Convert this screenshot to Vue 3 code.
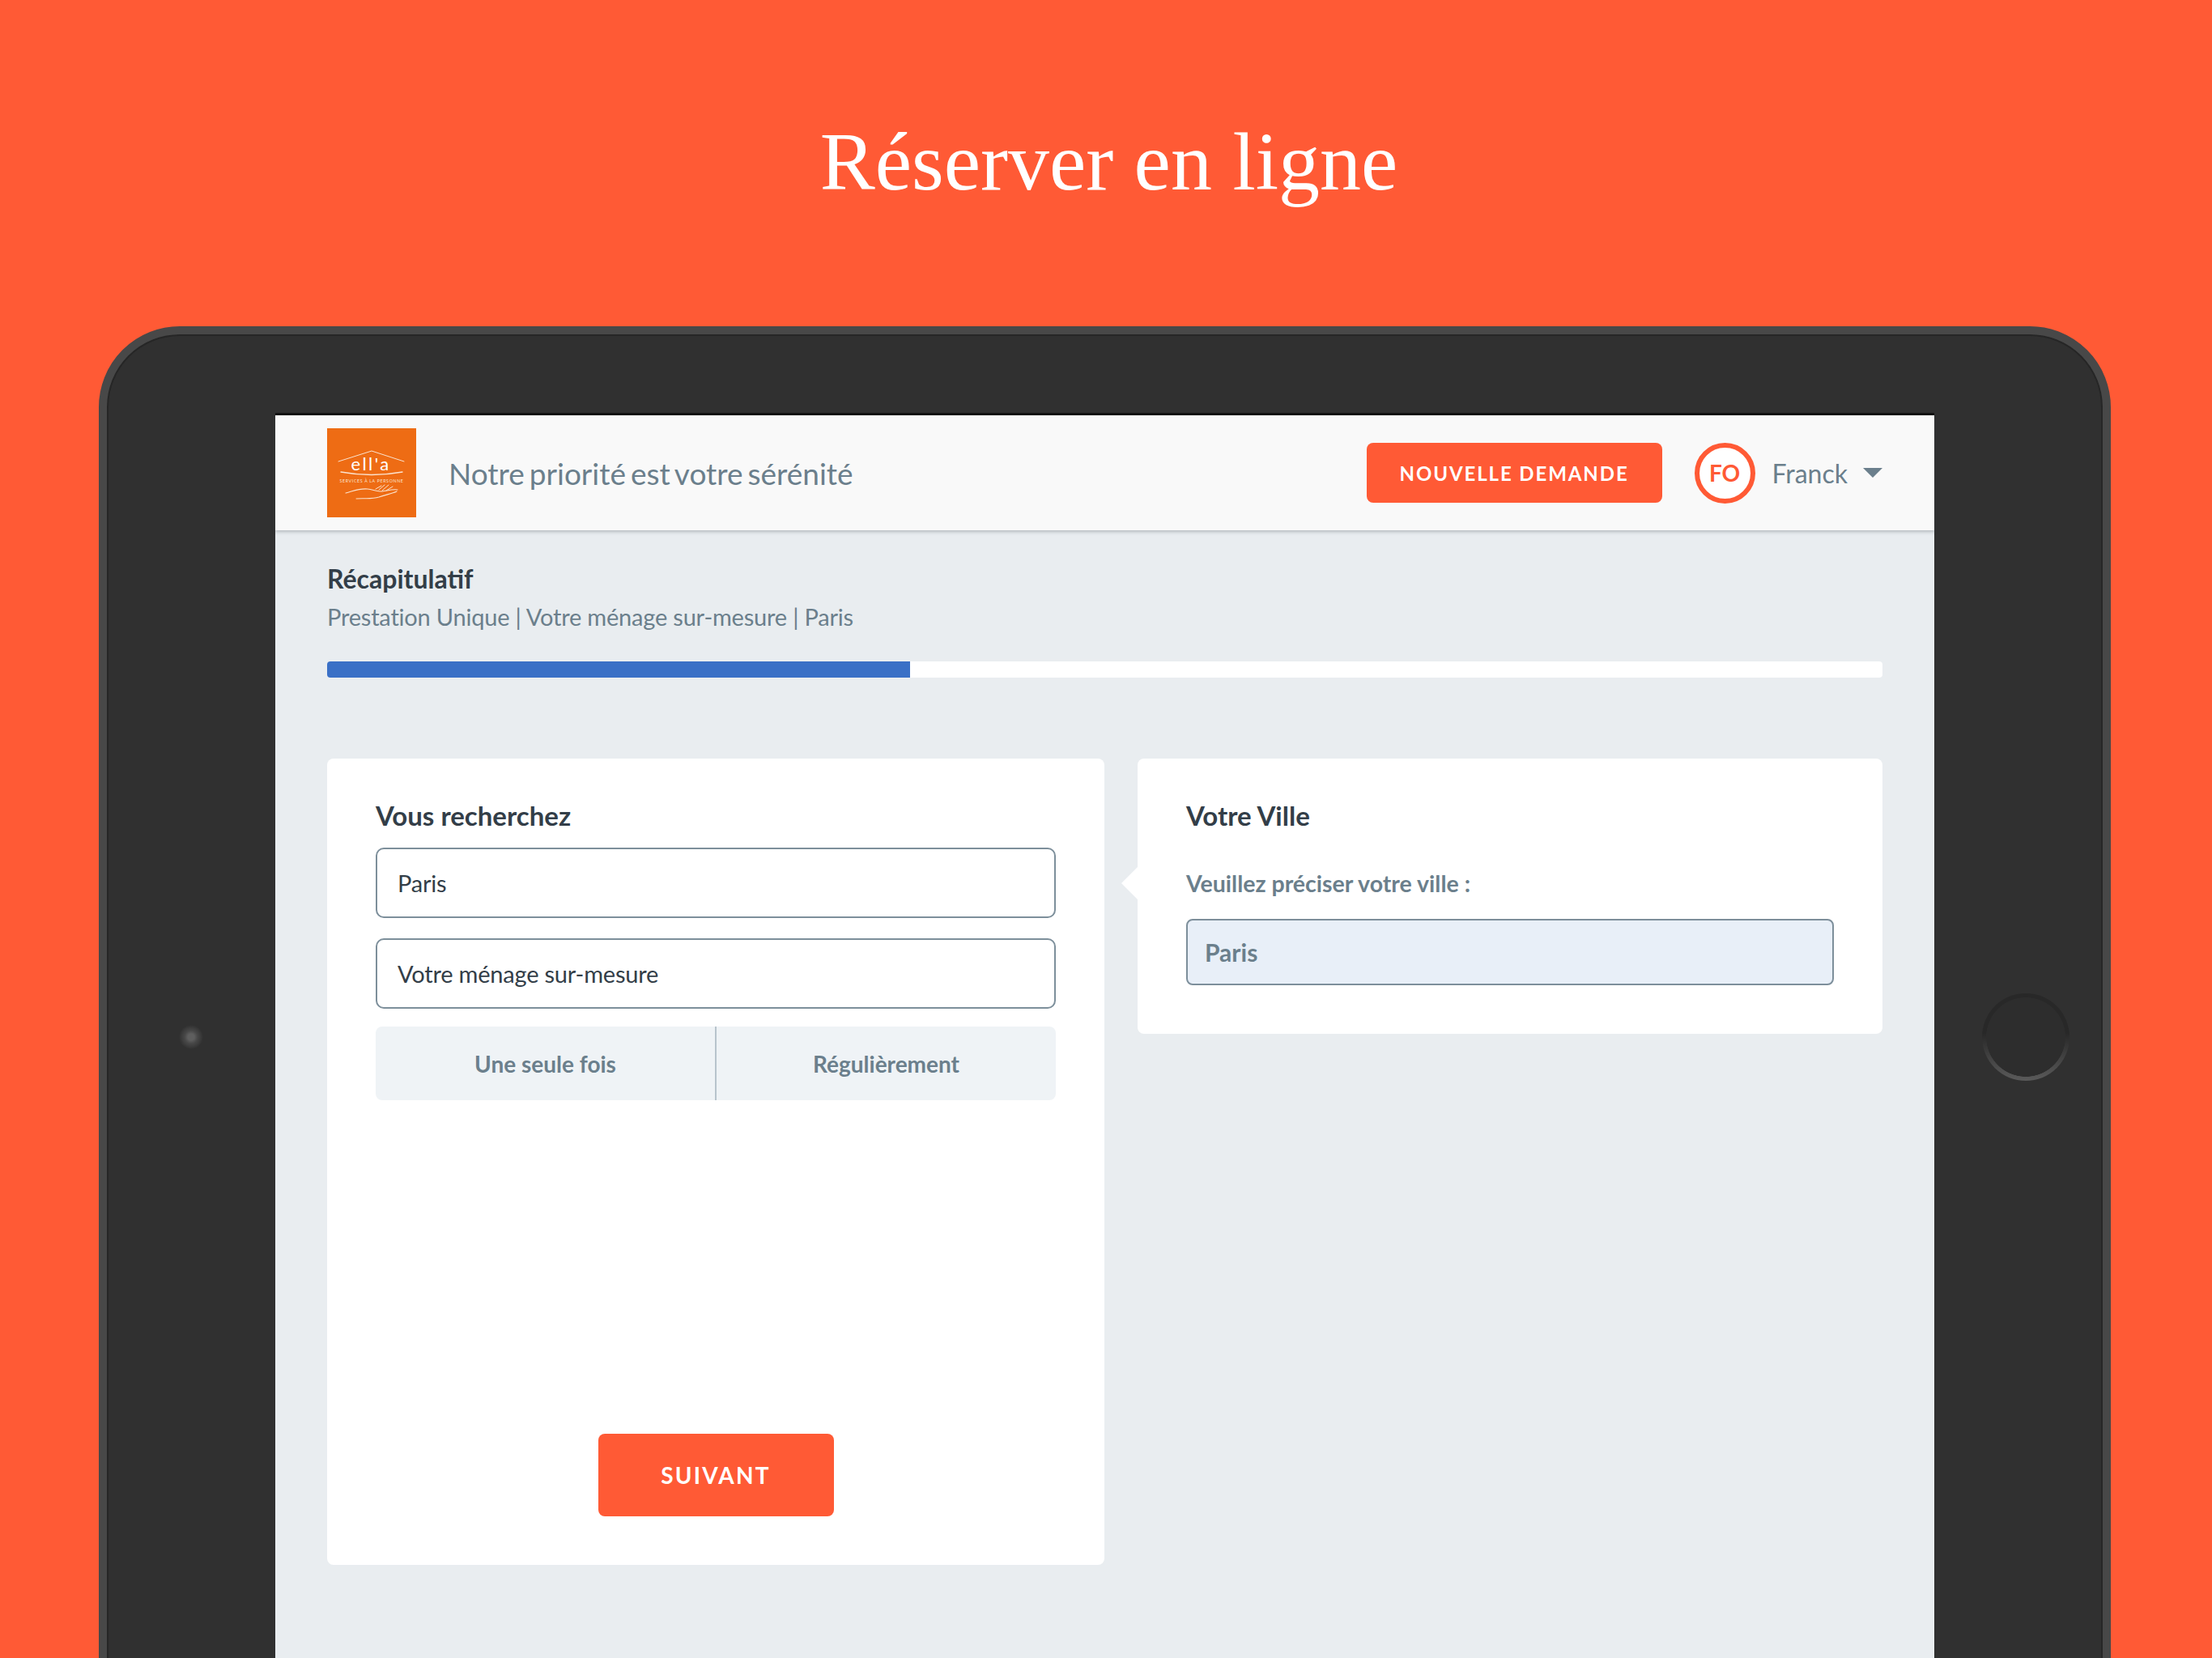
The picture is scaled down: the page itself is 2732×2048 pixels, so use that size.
<script setup>
const summary = 'Prestation Unique | Votre ménage sur-mesure | Paris'
const progress = 37.5
const choices = ['Paris', 'Votre ménage sur-mesure']
const frequencies = ['Une seule fois', 'Régulièrement']
</script>

<template>
  <div class="page">
    <h1 class="hero-title">Réserver en ligne</h1>

    <div class="tablet">
      <div class="bezel">
        <span class="camera"></span>
      </div>

      <main class="screen">
        <header class="topbar">
          <div class="brand">
            <svg class="logo" viewBox="0 0 110 110" role="img" aria-label="ell'a">
              <rect width="110" height="110" fill="#ee6c14" />
              <g fill="none" stroke="#fbe3cf" stroke-linecap="round">
                <path d="M14 41 L55 28 L95 41" stroke-width="1" />
                <path d="M17 54 Q55 61 93 54" stroke-width="1.3" />
                <path d="M23 80 C34 77 40 74 50 75 C57 76 62 78 68 78 C75 77 81 75 87 76" stroke-width="1.1" />
                <path d="M36 87 C46 86 54 88 64 85 C72 82 80 81 86 78" stroke-width="1.1" />
                <path d="M60 75 L67 71 M64 76 L71 70 M68 77 L76 70 M73 77 L81 72" stroke-width="1" />
              </g>
              <text class="logo-name" x="54" y="52" text-anchor="middle">ell'a</text>
              <text class="logo-sub" x="55" y="67" text-anchor="middle">SERVICES À LA PERSONNE</text>
            </svg>
            <span class="tagline">Notre priorité est votre sérénité</span>
          </div>

          <div class="account">
            <button type="button" class="new-request">NOUVELLE DEMANDE</button>
            <span class="avatar">FO</span>
            <span class="account-name">Franck</span>
            <span class="caret"></span>
          </div>
        </header>

        <section class="content">
          <h2 class="recap-title">Récapitulatif</h2>
          <p class="recap-text">{{ summary }}</p>
          <div class="progress">
            <div class="progress-bar" :style="{ width: progress + '%' }"></div>
          </div>

          <div class="columns">
            <div class="card card-search">
              <h3 class="card-title">Vous recherchez</h3>
              <div class="choice-list">
                <div v-for="choice in choices" :key="choice" class="choice">{{ choice }}</div>
              </div>
              <div class="segmented">
                <span v-for="item in frequencies" :key="item" class="segment">{{ item }}</span>
              </div>
              <button type="button" class="next">SUIVANT</button>
            </div>

            <div class="card card-city">
              <span class="card-arrow"></span>
              <h3 class="card-title">Votre Ville</h3>
              <label class="field-label" for="city">Veuillez préciser votre ville :</label>
              <input id="city" class="city-input" value="Paris" />
            </div>
          </div>
        </section>
      </main>

      <div class="bezel bezel-home">
        <span class="home"></span>
      </div>
    </div>
  </div>
</template>

<style>
html,
body {
  margin: 0;
  height: 2048px;
  overflow: hidden;
  background: #ff5a35;
}
</style>

<style scoped>
.page {
  height: 2048px;
  overflow: hidden;
  box-sizing: border-box;
  background: #ff5a35;
  padding: 0 125px 0 122px;
}

.hero-title {
  margin: 0;
  height: 403px;
  padding: 140px 0 0 10px;
  box-sizing: border-box;
  text-align: center;
  font-family: "Liberation Serif", serif;
  font-size: 102px;
  font-weight: 400;
  line-height: 120px;
  color: #fff;
}

.tablet {
  display: flex;
  height: 1756px;
  box-sizing: border-box;
  border: 10px solid #484848;
  border-radius: 100px;
  background: #303030;
  box-shadow: inset 0 0 0 2px #262626;
}

.bezel {
  flex: none;
  width: 208px;
  display: flex;
  align-items: center;
  justify-content: center;
}

.bezel-home {
  box-sizing: border-box;
  padding-left: 18px;
}

.camera {
  width: 30px;
  height: 30px;
  border-radius: 50%;
  background: radial-gradient(circle, #5e5e5e 0 4px, #474747 8px, #3e3e3e 11px, #303030 15px);
}

.home {
  width: 108px;
  height: 108px;
  border-radius: 50%;
  background:
    radial-gradient(closest-side, #2d2d2d 90%, transparent 91%),
    linear-gradient(#282828 45%, #5a5a5a 100%);
}

.screen {
  flex: 1;
  min-width: 0;
  margin-top: 97px;
  border-top: 3px solid #111;
  background: #e9edf0;
  font-family: Lato, "Liberation Sans", sans-serif;
}

.topbar {
  display: flex;
  justify-content: space-between;
  align-items: center;
  height: 142px;
  padding: 0 64px;
  background: #f9f9f9;
  box-shadow: 0 2px 4px rgba(60, 70, 80, 0.3);
}

.brand {
  display: flex;
  align-items: center;
  gap: 40px;
}

.logo {
  width: 110px;
  height: 110px;
  display: block;
}

.logo-name {
  font-family: Lato, sans-serif;
  font-size: 22px;
  letter-spacing: 2.4px;
  fill: #fff;
}

.logo-sub {
  font-family: Lato, sans-serif;
  font-size: 5.2px;
  letter-spacing: 0.7px;
  fill: #fbe3cf;
}

.tagline {
  font-size: 37px;
  color: #6b7f8c;
  word-spacing: -3.5px;
}

.account {
  display: flex;
  align-items: center;
}

.new-request {
  width: 365px;
  height: 74px;
  padding: 0;
  border: none;
  border-radius: 8px;
  background: #ff5a35;
  color: #fff;
  font: 700 24px Lato, sans-serif;
  letter-spacing: 1.9px;
}

.avatar {
  width: 75px;
  height: 75px;
  margin-left: 40px;
  box-sizing: border-box;
  display: flex;
  align-items: center;
  justify-content: center;
  border: 6px solid #ff5a35;
  border-radius: 50%;
  background: #fff;
  color: #ff5a35;
  font-size: 28px;
  font-weight: 700;
}

.account-name {
  margin-left: 21px;
  font-size: 32px;
  color: #6b7f8c;
}

.caret {
  width: 0;
  height: 0;
  margin-left: 19px;
  border-left: 12px solid transparent;
  border-right: 12px solid transparent;
  border-top: 12px solid #6b7f8c;
}

.content {
  padding: 38px 64px 0;
}

.recap-title {
  margin: 0;
  font-size: 32px;
  font-weight: 700;
  line-height: 44px;
  color: #333e48;
}

.recap-text {
  margin: 3px 0 0;
  font-size: 29px;
  letter-spacing: -0.2px;
  line-height: 44px;
  color: #6b7f8c;
}

.progress {
  height: 20px;
  margin-top: 33px;
  overflow: hidden;
  border-radius: 4px;
  background: #fff;
}

.progress-bar {
  height: 100%;
  background: #3a70c6;
}

.columns {
  display: flex;
  align-items: flex-start;
  gap: 41px;
  margin-top: 100px;
}

.card {
  position: relative;
  flex: 1;
  box-sizing: border-box;
  padding: 50px 60px 0;
  border-radius: 8px;
  background: #fff;
}

.card-search {
  flex: none;
  width: 960px;
  height: 996px;
  display: flex;
  flex-direction: column;
}

.card-city {
  height: 340px;
}

.card-arrow {
  position: absolute;
  left: -20px;
  top: 134px;
  width: 0;
  height: 0;
  border-top: 20px solid transparent;
  border-bottom: 20px solid transparent;
  border-right: 20px solid #fff;
}

.card-title {
  margin: 0;
  font-size: 33px;
  font-weight: 700;
  line-height: 40px;
  color: #333e48;
}

.choice-list {
  display: flex;
  flex-direction: column;
  gap: 25px;
  margin-top: 20px;
}

.choice {
  height: 87px;
  box-sizing: border-box;
  display: flex;
  align-items: center;
  padding: 0 25px;
  border: 2px solid #7d8f9b;
  border-radius: 10px;
  font-size: 29px;
  letter-spacing: -0.2px;
  color: #333e48;
}

.segmented {
  display: flex;
  height: 91px;
  margin-top: 22px;
  overflow: hidden;
  border-radius: 8px;
  background: #eff3f6;
}

.segment {
  flex: 1;
  display: flex;
  align-items: center;
  justify-content: center;
  font-size: 28px;
  font-weight: 700;
  color: #6b7f8c;
}

.segment + .segment {
  border-left: 2px solid #b8c4cc;
}

.next {
  width: 291px;
  height: 102px;
  margin: auto auto 60px;
  padding: 0;
  border: none;
  border-radius: 8px;
  background: #ff5a35;
  color: #fff;
  font: 700 28px Lato, sans-serif;
  letter-spacing: 2.2px;
}

.field-label {
  display: block;
  margin-top: 44px;
  font-size: 28.5px;
  font-weight: 700;
  line-height: 40px;
  color: #6b7f8c;
}

.city-input {
  display: block;
  width: 100%;
  height: 82px;
  margin-top: 24px;
  box-sizing: border-box;
  padding: 0 21px;
  border: 2px solid #7d8f9b;
  border-radius: 8px;
  background: #e8eff8;
  font: 700 30px Lato, sans-serif;
  color: #6b7f8c;
  outline: none;
}
</style>
